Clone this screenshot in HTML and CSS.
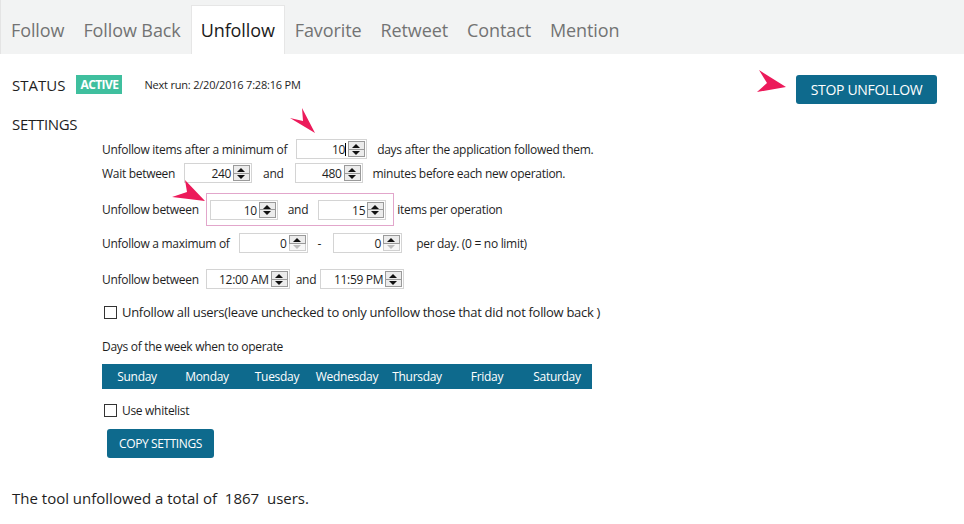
FILE: index.html
```html
<!DOCTYPE html>
<html lang="en">
<head>
    <meta charset="UTF-8">
    <title>Unfollow</title>
    <link rel="stylesheet" href="styles.css">
</head>
<body>
    <div class="tabs">
        <span class="tab">Follow</span>
        <span class="tab">Follow Back</span>
        <span class="tab active">Unfollow</span>
        <span class="tab">Favorite</span>
        <span class="tab">Retweet</span>
        <span class="tab">Contact</span>
        <span class="tab">Mention</span>
    </div>

    <div class="page">
        <!-- status line -->
        <div class="status-row">
            <div class="status">
                <span class="status-label">STATUS</span>
                <span class="badge">ACTIVE</span>
                <span class="next-run">Next run: 2/20/2016 7:28:16 PM</span>
            </div>
            <button class="btn btn-stop">STOP UNFOLLOW</button>
        </div>

        <div class="section-title">SETTINGS</div>

        <div class="settings">
            <div class="row row-1">
                <span class="label">Unfollow items after a minimum of</span>
                <span class="num w70"><span class="val">10<i class="caret"></i></span><span class="spin"><b class="up"></b><b class="down"></b></span></span>
                <span class="label after">days after the application followed them.</span>
            </div>

            <div class="row row-2">
                <span class="label">Wait between</span>
                <span class="num w68"><span class="val">240</span><span class="spin"><b class="up"></b><b class="down"></b></span></span>
                <span class="label mid">and</span>
                <span class="num w68"><span class="val">480</span><span class="spin"><b class="up"></b><b class="down"></b></span></span>
                <span class="label after">minutes before each new operation.</span>
            </div>

            <div class="row row-3">
                <span class="label">Unfollow between</span>
                <div class="highlight">
                    <span class="num w68"><span class="val">10</span><span class="spin"><b class="up"></b><b class="down"></b></span></span>
                    <span class="label mid">and</span>
                    <span class="num w68"><span class="val">15</span><span class="spin"><b class="up"></b><b class="down"></b></span></span>
                </div>
                <span class="label after-box">items per operation</span>
            </div>

            <div class="row row-4">
                <span class="label">Unfollow a maximum of</span>
                <span class="num w69"><span class="val">0</span><span class="spin"><b class="up"></b><b class="down off"></b></span></span>
                <span class="label dash">-</span>
                <span class="num w69"><span class="val">0</span><span class="spin"><b class="up"></b><b class="down off"></b></span></span>
                <span class="label after-wide">per day. (0 = no limit)</span>
            </div>

            <div class="row row-5">
                <span class="label">Unfollow between</span>
                <span class="num w84 first"><span class="val">12:00 AM</span><span class="spin"><b class="up"></b><b class="down"></b></span></span>
                <span class="label mid-tight">and</span>
                <span class="num w84"><span class="val">11:59 PM</span><span class="spin"><b class="up"></b><b class="down"></b></span></span>
            </div>

            <label class="check row-6">
                <span class="box"></span>
                Unfollow all users(leave unchecked to only unfollow those that did not follow back )
            </label>

            <div class="days-title">Days of the week when to operate</div>
            <div class="days">
                <span>Sunday</span>
                <span>Monday</span>
                <span>Tuesday</span>
                <span>Wednesday</span>
                <span>Thursday</span>
                <span>Friday</span>
                <span>Saturday</span>
            </div>

            <label class="check small row-7">
                <span class="box"></span>
                Use whitelist
            </label>

            <button class="btn btn-copy">COPY SETTINGS</button>
        </div>

        <p class="total">The tool unfollowed a total of &nbsp;1867 &nbsp;users.</p>

        <!-- annotation arrows drawn over the screenshot -->
        <svg class="arrow arrow-stop" width="32" height="24" viewBox="0 0 32 24"><polygon points="4,0 31,17 2,22 12,13"/></svg>
        <svg class="arrow arrow-days" width="28" height="26" viewBox="0 0 28 26"><polygon points="12,0 25,25 0,10 13,13"/></svg>
        <svg class="arrow arrow-box" width="34" height="24" viewBox="0 0 34 24"><polygon points="13,0 33,21 0,17 15,12"/></svg>
    </div>
</body>
</html>
```

FILE: styles.css
```css
body {
    margin: 0;
    font-family: "Open Sans", "Noto Sans", sans-serif;
    color: #1e1e1e;
    background: #fff;
}

/* tab strip */
.tabs {
    display: flex;
    align-items: flex-end;
    height: 54px;
    background: #f2f3f3;
    padding-left: 1px;
    border-left: 1px solid #e4e4e4;
}
.tab {
    padding: 0 9px 11px 9px;
    font-size: 18px;
    letter-spacing: -0.1px;
    color: #737373;
    line-height: 26px;
    margin-right: 1px;
}
.tab.active {
    background: #fff;
    color: #1a1a1a;
    padding-top: 11px;
    padding-bottom: 11px;
    border: 1px solid #e6e6e6;
    border-bottom: none;
}

.page {
    position: relative;
    padding: 0 27px 0 12px;
}

/* status line */
.status-row {
    display: flex;
    justify-content: space-between;
    align-items: flex-start;
    padding-top: 21px;
}
.status {
    display: flex;
    align-items: center;
    height: 19px;
}
.status-label {
    font-size: 15px;
    letter-spacing: 0;
}
.badge {
    margin-left: 11px;
    width: 46px;
    height: 19px;
    line-height: 19px;
    text-align: center;
    background: #3fbf9e;
    color: #fff;
    font-size: 12px;
    font-weight: bold;
    letter-spacing: -0.6px;
}
.next-run {
    margin-left: 22px;
    font-size: 11px;
    letter-spacing: -0.2px;
}

.btn {
    border: none;
    border-radius: 3px;
    background: #0e6a8d;
    color: #fff;
    font-family: inherit;
    cursor: pointer;
}
.btn-stop {
    width: 141px;
    height: 29px;
    font-size: 14px;
    letter-spacing: -0.3px;
}

.section-title {
    margin-top: 10px;
    font-size: 15px;
    line-height: 20px;
    letter-spacing: -0.3px;
}

/* settings form */
.settings {
    padding-left: 90px;
    font-size: 12px;
    letter-spacing: -0.3px;
}
.row {
    display: flex;
    align-items: center;
    height: 20px;
}
.row-1 { margin-top: 5px; }
.row-2 { margin-top: 4px; }
.row-3 { margin-top: 10px; height: 33px; }
.row-4 { margin-top: 7px; }
.row-5 { margin-top: 16px; }

.label { white-space: nowrap; }
.row .num { margin-left: 9px; }
.row .after { margin-left: 10px; }
.row .mid { margin: 0 11px 0 11px; }
.row .mid + .num { margin-left: 0; }
.row-3 .mid { margin: 0 10px 0 10px; }
.row .mid-tight { margin: 0 4px 0 6px; }
.row .mid-tight + .num { margin-left: 0; }
.row .num.first { margin-left: 7px; }
.row .dash { margin: 0 12px 0 10px; }
.row .dash + .num { margin-left: 0; }
.row .after-wide { margin-left: 14px; }
.row .after-box { margin-left: 3px; }

.highlight {
    display: flex;
    align-items: center;
    margin-left: 7px;
    height: 31px;
    padding: 0 7px 0 3px;
    border: 1px solid #e2a6cb;
}
.highlight .num { margin-left: 0; }

.num {
    display: inline-flex;
    height: 20px;
    box-sizing: border-box;
    border: 1px solid #d4d4d4;
    background: #fff;
    padding: 1px 1px 1px 0;
}
.w68 { width: 68px; }
.w69 { width: 69px; }
.w70 { width: 71px; }
.w84 { width: 84px; }
.val {
    flex: 1;
    text-align: right;
    line-height: 17px;
    padding-right: 2px;
}
.caret {
    display: inline-block;
    width: 1px;
    height: 13px;
    background: #000;
    vertical-align: -2px;
}
.spin {
    display: flex;
    flex-direction: column;
    width: 17px;
}
.spin b {
    flex: 1;
    position: relative;
    border: 1px solid #9a9a9a;
    background: #ececec;
}
.spin b + b { border-top: none; }
.spin b::after {
    content: "";
    position: absolute;
    left: 3px;
    top: 2px;
    border-left: 4px solid transparent;
    border-right: 4px solid transparent;
}
.spin .up::after { border-bottom: 4px solid #111; }
.spin .down::after { border-top: 4px solid #111; top: 1px; }
.spin .down.off { border-color: #d0d0d0; background: #f7f7f7; }
.spin .down.off::after { border-top-color: #bdbdbd; }

.check {
    display: flex;
    align-items: center;
    gap: 5px;
    height: 20px;
    padding-left: 2px;
    font-size: 13px;
    letter-spacing: -0.3px;
}
.check .box {
    width: 11px;
    height: 11px;
    border: 1px solid #333;
    background: #fff;
}
.row-6 { margin-top: 13px; }
.row-7 { margin-top: 13px; height: 16px; font-size: 12px; }

.days-title {
    margin-top: 17px;
    line-height: 16px;
    font-size: 12px;
}
.days {
    display: grid;
    grid-template-columns: repeat(7, 70px);
    width: 490px;
    margin-top: 9px;
    height: 25px;
    background: #0e6a8d;
    color: #fff;
    font-size: 12px;
    line-height: 25px;
    text-align: center;
}

.btn-copy {
    display: block;
    margin: 11px 0 0 5px;
    width: 107px;
    height: 29px;
    font-size: 12px;
    letter-spacing: -0.4px;
}

.total {
    margin: 30px 0 0;
    font-size: 15px;
    line-height: 20px;
    letter-spacing: 0;
}

/* pink annotation arrows */
.arrow {
    position: absolute;
    fill: #ec1a5a;
}
.arrow-stop { left: 755px; top: 16px; }
.arrow-days { left: 290px; top: 54px; }
.arrow-box { left: 172px; top: 126px; }
```
